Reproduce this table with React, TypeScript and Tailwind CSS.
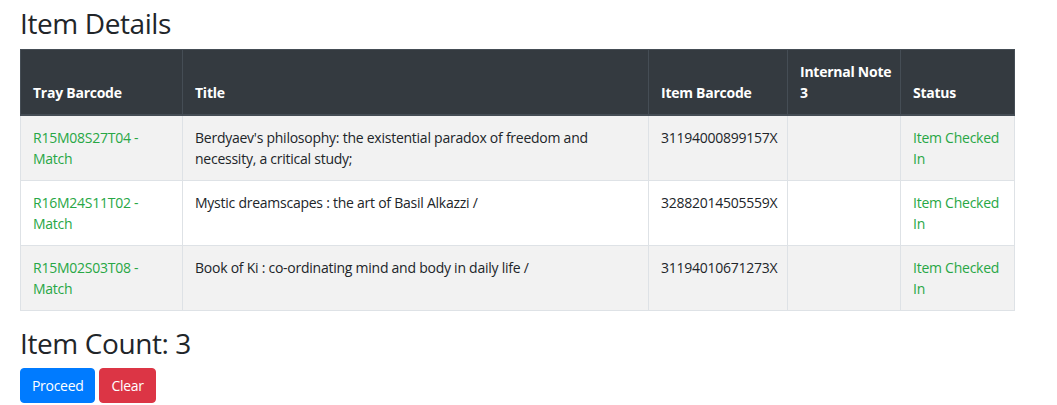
const rows = [
  {
    tray: "R15M08S27T04 - Match",
    title: "Berdyaev's philosophy: the existential paradox of freedom and necessity, a critical study;",
    barcode: "31194000899157X",
  },
  {
    tray: "R16M24S11T02 - Match",
    title: "Mystic dreamscapes : the art of Basil Alkazzi /",
    barcode: "32882014505559X",
  },
  {
    tray: "R15M02S03T08 - Match",
    title: "Book of Ki : co-ordinating mind and body in daily life /",
    barcode: "31194010671273X",
  },
];

export default function App() {
  return (
    <div className="min-h-[405px] bg-white px-5 pt-[7px] font-['Segoe_UI','Open_Sans',sans-serif] text-[#212529]">
      <h3 className="mb-2 text-[28px] font-normal leading-[1.2] tracking-[-0.4px]">Item Details</h3>

      <table className="mb-4 w-[994px] table-fixed border-collapse text-[14px] leading-[1.5] tracking-[-0.25px]">
        <colgroup>
          <col className="w-[162px]" />
          <col className="w-[466px]" />
          <col className="w-[139px]" />
          <col className="w-[113px]" />
          <col className="w-[114px]" />
        </colgroup>
        <thead>
          <tr className="bg-[#343a40] text-left text-white">
            <th className="border border-b-2 border-[#454d55] px-3 py-[11px] align-bottom font-bold">Tray Barcode</th>
            <th className="border border-b-2 border-[#454d55] px-3 py-[11px] align-bottom font-bold">Title</th>
            <th className="border border-b-2 border-[#454d55] px-3 py-[11px] align-bottom font-bold">Item Barcode</th>
            <th className="whitespace-nowrap border border-b-2 border-[#454d55] px-3 py-[11px] align-bottom font-bold">
              Internal Note
              <br />3
            </th>
            <th className="border border-b-2 border-[#454d55] px-3 py-[11px] align-bottom font-bold">Status</th>
          </tr>
        </thead>
        <tbody>
          {rows.map((r, i) => (
            <tr key={r.barcode} className={i % 2 === 0 ? "bg-[#f2f2f2]" : "bg-white"}>
              <td className="border border-[#dee2e6] px-3 py-[11px] align-top text-[#28a745]">{r.tray}</td>
              <td className="border border-[#dee2e6] px-3 py-[11px] align-top">{r.title}</td>
              <td className="border border-[#dee2e6] px-3 py-[11px] align-top">{r.barcode}</td>
              <td className="border border-[#dee2e6] px-3 py-[11px] align-top"></td>
              <td className="whitespace-nowrap border border-[#dee2e6] px-3 py-[11px] align-top text-[#28a745]">
                Item Checked
                <br />
                In
              </td>
            </tr>
          ))}
        </tbody>
      </table>

      <h3 className="mb-2 text-[28px] font-normal leading-[1.2] tracking-[-0.4px]">Item Count: 3</h3>
      <div className="flex gap-1">
        <button className="rounded border border-[#007bff] bg-[#007bff] px-[11px] py-1.5 text-[14px] leading-[1.5] tracking-[-0.3px] text-white">
          Proceed
        </button>
        <button className="rounded border border-[#dc3545] bg-[#dc3545] px-[11px] py-1.5 text-[14px] leading-[1.5] tracking-[-0.3px] text-white">
          Clear
        </button>
      </div>
    </div>
  );
}
